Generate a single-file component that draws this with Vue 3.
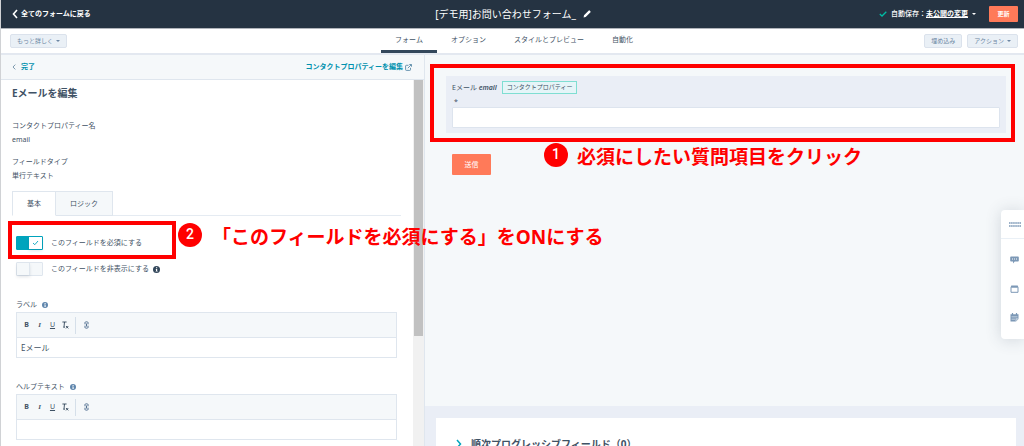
<script setup>
import { ref } from 'vue'

const tabs = ['フォーム', 'オプション', 'スタイルとプレビュー', '自動化']
const required = ref(true)
const hidden = ref(false)
const editors = ref([
  { id: 'label', name: 'ラベル', value: 'Eメール' },
  { id: 'help', name: 'ヘルプテキスト', value: '' }
])
</script>

<template>
  <div class="page">
    <header class="topbar">
      <a class="back" href="#">
        <svg width="6" height="10" viewBox="0 0 6 10"><path d="M5 1 1.5 5 5 9" fill="none" stroke="#fff" stroke-width="1.6" /></svg>
        全てのフォームに戻る
      </a>
      <h1 class="form-name">
        [デモ用]お問い合わせフォーム_
        <button class="bare" aria-label="名前を編集">
          <svg width="8" height="8" viewBox="0 0 8 8"><path d="M.6 7.4 1 5.3 5.800 .5Q6.200 .1 6.600 .5L7.500 1.400Q7.900 1.800 7.500 2.200L2.700 7Z" fill="#fff" /></svg>
        </button>
      </h1>
      <div class="save">
        <svg width="8" height="6" viewBox="0 0 8 6"><path d="M.8 3 3 5 7.300 .8" fill="none" stroke="#00bda5" stroke-width="1.300" /></svg>
        <span class="save-text">自動保存：<a href="#">未公開の変更</a></span>
        <i class="caret"></i>
        <button class="update">更新</button>
      </div>
    </header>

    <nav class="subnav">
      <div class="left"><button class="soft">もっと詳しく <i class="caret"></i></button></div>
      <div class="tabs">
        <button v-for="(t, i) in tabs" :key="t" class="tab" :class="{ on: i === 0 }">{{ t }}</button>
      </div>
      <div class="right">
        <button class="soft">埋め込み</button>
        <button class="soft">アクション<i class="caret"></i></button>
      </div>
    </nav>

    <div class="main">
      <aside class="side">
        <div class="side-head">
          <a href="#">
            <svg width="4" height="6" viewBox="0 0 4 6"><path d="M3.300 .6 1 3 3.300 5.400" fill="none" stroke="#6f8ea5" stroke-width=".9" /></svg>
            完了
          </a>
          <a href="#" class="edit-link">コンタクトプロパティーを編集
            <svg width="7" height="7" viewBox="0 0 7 7"><path d="M3.500 1.300H1.300Q.6 1.300 .6 2V5.700Q.6 6.400 1.300 6.400H4.800Q5.500 6.400 5.500 5.700V3.800M2.800 4.200 6.300 .7M4.300 .5H6.500V2.700" fill="none" stroke="#5a8aa8" stroke-width=".9" /></svg>
          </a>
        </div>
        <div class="side-row">
          <div class="side-body">
            <h2>Eメールを編集</h2>
            <dl>
              <dt>コンタクトプロパティー名</dt>
              <dd>email</dd>
              <dt>フィールドタイプ</dt>
              <dd>単行テキスト</dd>
            </dl>
            <div class="inner-tabs">
              <button class="inner on">基本</button>
              <button class="inner">ロジック</button>
            </div>
            <div class="settings">
              <div class="toggle-row">
                <label class="toggle"><input v-model="required" type="checkbox" /><span class="track"><span class="knob"><svg v-if="required" width="7" height="6" viewBox="0 0 7 6"><path d="M1 3 2.800 4.700 6 1" fill="none" stroke="#00a4bd" stroke-width=".9" /></svg></span></span>このフィールドを必須にする</label>
                <div class="frame frame-toggle"></div>
                <div class="note note-toggle"><b class="num">2</b><span>「このフィールドを必須にする」をONにする</span></div>
              </div>
              <div class="toggle-row">
                <label class="toggle"><input v-model="hidden" type="checkbox" /><span class="track"><span class="knob"></span></span>このフィールドを非表示にする</label>
                <svg class="info dark" width="7" height="7" viewBox="0 0 7 7"><circle cx="3.500" cy="3.500" r="3.500" /><path d="M3 1.200h1.200v1H3zM2.700 2.900h1.500v2h.5v.7H2.600v-.7H3V3.500h-.3z" fill="#fff" /></svg>
              </div>
              <div v-for="e in editors" :key="e.id" class="field">
                <div class="field-name">
                  <label :for="e.id">{{ e.name }}</label>
                  <svg class="info" width="6" height="6" viewBox="0 0 7 7"><circle cx="3.500" cy="3.500" r="3.500" /><path d="M3 1.200h1.200v1H3zM2.700 2.900h1.500v2h.5v.7H2.600v-.7H3V3.500h-.3z" fill="#fff" /></svg>
                </div>
                <div class="editor">
                  <div class="tools">
                    <button class="tool" aria-label="太字"><b>B</b></button>
                    <button class="tool" aria-label="斜体"><i>I</i></button>
                    <button class="tool" aria-label="下線"><u>U</u></button>
                    <button class="tool" aria-label="書式をクリア">
                      <svg width="7" height="8" viewBox="0 0 7 8"><path d="M.4 1H4.600M2.500 1 2 6M1.200 6.200H3M4 5 6.300 7.400M6.300 5 4 7.400" fill="none" stroke="#33475b" stroke-width=".9" /></svg>
                    </button>
                    <span class="rule"></span>
                    <button class="tool" aria-label="リンク">
                      <svg width="5" height="8" viewBox="0 0 5 8"><path d="M1 3.300V1.500Q1 .8 2.500 .8T4 1.500V3.300M1 4.700V6.500Q1 7.200 2.500 7.200T4 6.500V4.700M2.500 2.500V5.500" fill="none" stroke="#516f90" stroke-width="1" /></svg>
                    </button>
                  </div>
                  <input :id="e.id" v-model="e.value" type="text" />
                </div>
              </div>
            </div>
          </div>
          <div class="scroll"><div class="thumb"></div></div>
        </div>
      </aside>

      <main class="canvas">
        <div class="preview">
          <div class="card">
            <div class="card-name">
              <label for="email-preview">Eメール <em>email</em></label>
              <span class="badge">コンタクトプロパティー</span>
            </div>
            <div class="star">*</div>
            <input id="email-preview" type="text" />
            <div class="frame frame-card"></div>
            <div class="note note-card"><b class="num">1</b><span>必須にしたい質問項目をクリック</span></div>
          </div>
          <button class="send">送信</button>
        </div>
        <section class="queue">
          <h3>
            <svg width="6" height="10" viewBox="0 0 6 10"><path d="M1 1 4.500 5 1 9" fill="none" stroke="#00a4bd" stroke-width="1.500" /></svg>
            順次プログレッシブフィールド（0）
          </h3>
        </section>
        <div class="dock">
          <button class="dock-top" aria-label="移動">
            <svg width="12" height="5" viewBox="0 0 12 5"><path d="M0 1H12M0 4H12" stroke="#7c98b6" stroke-width="1.600" stroke-dasharray="1.600 .48" /></svg>
          </button>
          <button aria-label="チャット">
            <svg width="9" height="8" viewBox="0 0 9 8"><path d="M1 .5H8Q8.800 .5 8.800 1.300V4.700Q8.800 5.500 8 5.500H4.700L3 7.500V5.500H1Q.2 5.500 .2 4.700V1.300Q.2 .5 1 .5Z" fill="#7c98b6" /><path d="M2 3H7" stroke="#fff" stroke-dasharray="1 1" /></svg>
          </button>
          <button aria-label="ウィンドウ">
            <svg width="9" height="8" viewBox="0 0 9 8"><path d="M1.300 .5H7.700L8.500 2.800H.5Z" fill="#7c98b6" /><path d="M1 2.500V7.300H8V2.500" fill="none" stroke="#7c98b6" /></svg>
          </button>
          <button aria-label="カレンダー">
            <svg width="9" height="9" viewBox="0 0 9 9"><path d="M.5 1.300H8.500V6L6 8.500H.5Z" fill="#7c98b6" /><path d="M2.500 0V2M6.500 0V2" stroke="#7c98b6" stroke-width="1.200" /><path d="M1.500 3.500H7.500M1.500 5H7.500M1.500 6.500H5" stroke="#dce6ef" stroke-width=".5" /><path d="M6 8.500V6H8.500" fill="none" stroke="#fff" stroke-width=".6" /></svg>
          </button>
        </div>
      </main>
    </div>
  </div>
</template>

<style>
body { margin: 0; }
</style>

<style scoped>
.page, .page * { box-sizing: border-box; }
.page {
  display: flex;
  flex-direction: column;
  height: 100vh;
  overflow: hidden;
  border-left: 1px solid #d0d2d5;
  background: #fff;
  color: #3f5265;
  font: 7px/14px "Noto Sans", "Noto Sans CJK JP", sans-serif;
}
button, input { font: inherit; color: inherit; margin: 0; padding: 0; border: 0; background: none; }
button { display: flex; align-items: center; justify-content: center; white-space: nowrap; }
svg { flex: none; display: block; }
a { color: inherit; text-decoration: none; }
h1, h2, h3, dl, dd { margin: 0; }
.caret { width: 0; height: 0; border: 2px solid transparent; border-top-color: currentColor; border-bottom: 0; }

.topbar, .subnav { display: grid; grid-template-columns: 1fr auto 1fr; align-items: center; }
.topbar { flex: 0 0 29px; background: #253342; color: #fff; border-bottom: 1px solid #b0b4ba; padding: 0 6px 0 11px; }
.back { display: flex; align-items: center; gap: 3px; font-weight: 700; }
.form-name { display: flex; align-items: center; gap: 7px; padding-right: 4px; font-size: 10px; font-weight: 400; }
.save { display: flex; align-items: center; justify-content: flex-end; gap: 4px; }
.save-text { font-weight: 500; }
.save-text a { font-weight: 700; text-decoration: underline; }
.update { width: 29px; height: 16px; margin-left: 9px; border-radius: 1px; background: #ff7a59; font-size: 6px; font-weight: 700; }

.subnav { flex: 0 0 24px; border-bottom: 2px solid #e3e8f0; padding: 0 6px 0 9px; }
.left, .right { display: flex; }
.right { justify-content: flex-end; gap: 5px; }
.soft { height: 14px; padding: 0 6px; gap: 3px; border: 1px solid #dbe2ec; border-radius: 2px; background: #eaf0f6; color: #6c86a3; font-size: 6px; }
.tabs { display: flex; align-self: stretch; }
.tab { height: 24px; padding: 0 14px; border-bottom: 3px solid transparent; }
.tab.on { border-color: #33475b; }

.main { flex: 1; min-height: 0; display: grid; grid-template: minmax(0, 1fr) / 424px 1fr; }
.side { position: relative; z-index: 2; display: flex; flex-direction: column; border-right: 1px solid #dfe6ee; }
.side-head { flex: 0 0 25px; display: flex; justify-content: space-between; align-items: center; padding: 0 12px 0 11px; background: #f5f8fa; border-bottom: 1px solid #dfe6ee; color: #0091ae; font-weight: 700; }
.side-head a { display: flex; align-items: center; gap: 5px; }
.side-head .edit-link { gap: 2px; }
.side-row { flex: 1; min-height: 0; display: flex; }
.side-body { flex: 1; min-width: 0; padding: 5px 12px 0 11px; }
h2 { font-size: 10px; line-height: 16px; margin-bottom: 18px; }
dd { margin-bottom: 8px; }
.inner-tabs { display: flex; height: 25px; border-bottom: 1px solid #e5ebf2; }
.inner { height: 25px; padding: 0 14px; border: 1px solid #dfe6ee; background: #f5f8fa; }
.inner + .inner { border-left: 0; }
.inner.on { background: #fff; border-bottom-color: #fff; }
.settings { padding: 19px 4px 0; }
.toggle-row { position: relative; display: flex; align-items: center; gap: 4px; height: 16px; margin-bottom: 10px; }
.toggle { display: flex; align-items: center; gap: 8px; }
.toggle input { position: absolute; width: 27px; height: 14px; opacity: 0; }
.track { display: flex; width: 27px; height: 14px; border: 1px solid #dfe6ee; border-radius: 1px; background: #f5f8fa; }
.knob { display: flex; align-items: center; justify-content: center; width: 13px; height: 12px; background: #f5f8fa; border-right: 1px solid #dfe6ee; box-shadow: 0 2px 3px #33475b22; }
input:checked + .track { justify-content: flex-end; border-color: #00a4bd; background: #00a4bd; }
input:checked + .track .knob { background: #fff; border: 0; }
.info { fill: #5f86ad; }
.info.dark { fill: #33475b; }
.field { padding-top: 11px; margin-bottom: 11px; }
.field-name { display: flex; align-items: center; gap: 5px; }
.editor { border: 1px solid #dfe6ee; }
.tools { display: flex; align-items: center; gap: 6px; height: 25px; padding-left: 6px; background: #f5f8fa; border-bottom: 1px solid #dfe6ee; }
.tool { width: 7px; height: 14px; }
.tool i { font-family: "Liberation Serif", serif; font-weight: 700; }
.rule { width: 1px; height: 17px; margin-right: 1px; background: #d5dfe9; }
.editor input { display: block; width: 100%; height: 19px; padding: 0 4px; font-size: 8px; }
.scroll { flex: 0 0 11px; background: #f1f1f1; padding: 0 1px; }
.thumb { height: 70%; background: #c1c1c1; }

.canvas { position: relative; display: flex; flex-direction: column; min-width: 0; background: #f5f8fa; }
.preview { flex: 1; min-height: 0; padding: 21px 18px 0 21px; }
.card { position: relative; padding: 5px 6px; background: #eaeef6; }
.card-name { display: flex; align-items: center; gap: 5px; height: 13px; }
em { font-weight: 600; }
.badge { height: 13px; padding: 0 4px; border: 1px solid #7fded2; background: #e5f5f8; font-size: 6px; line-height: 11px; }
.star { height: 13px; padding-left: 2px; line-height: 16px; }
.card input { display: block; width: 100%; height: 21px; border: 1px solid #dde4ee; border-radius: 1px; background: #fff; }
.send { width: 39px; height: 21px; margin: 21px 0 0 6px; border-radius: 1px; background: #ff7a59; color: #fff; }
.queue { flex: 0 0 40px; overflow: hidden; padding: 12px 8px 0 11px; background: #eaeef6; }
h3 { display: flex; align-items: center; gap: 9px; padding: 18px 20px; background: #fff; font-size: 10px; line-height: 16px; }

.dock { position: absolute; right: 0; top: 155px; width: 23px; padding-bottom: 7px; border-radius: 4px 0 0 4px; background: #fff; box-shadow: 0 1px 16px #33475b30; }
.dock button { width: 100%; height: 29px; padding-left: 4px; }
.dock .dock-top { border-bottom: 1px solid #eaf0f6; margin-bottom: 6px; }

.frame { position: absolute; border: 4px solid #f00; pointer-events: none; }
.frame-toggle { left: -8px; top: -14px; width: 168px; height: 38px; }
.frame-card { inset: -12px -9px -9px -16px; }
.note { position: absolute; display: flex; align-items: center; color: #f00; font-size: 19px; font-weight: 700; line-height: 24px; white-space: nowrap; pointer-events: none; }
.note-toggle { left: 162px; top: -12px; gap: 10px; }
.note-card { left: 98px; top: 67px; gap: 9px; }
.num { width: 24px; height: 24px; margin-bottom: 4px; border-radius: 50%; background: #f00; color: #fff; font: 500 14px/22px Roboto, sans-serif; text-align: center; }
</style>
